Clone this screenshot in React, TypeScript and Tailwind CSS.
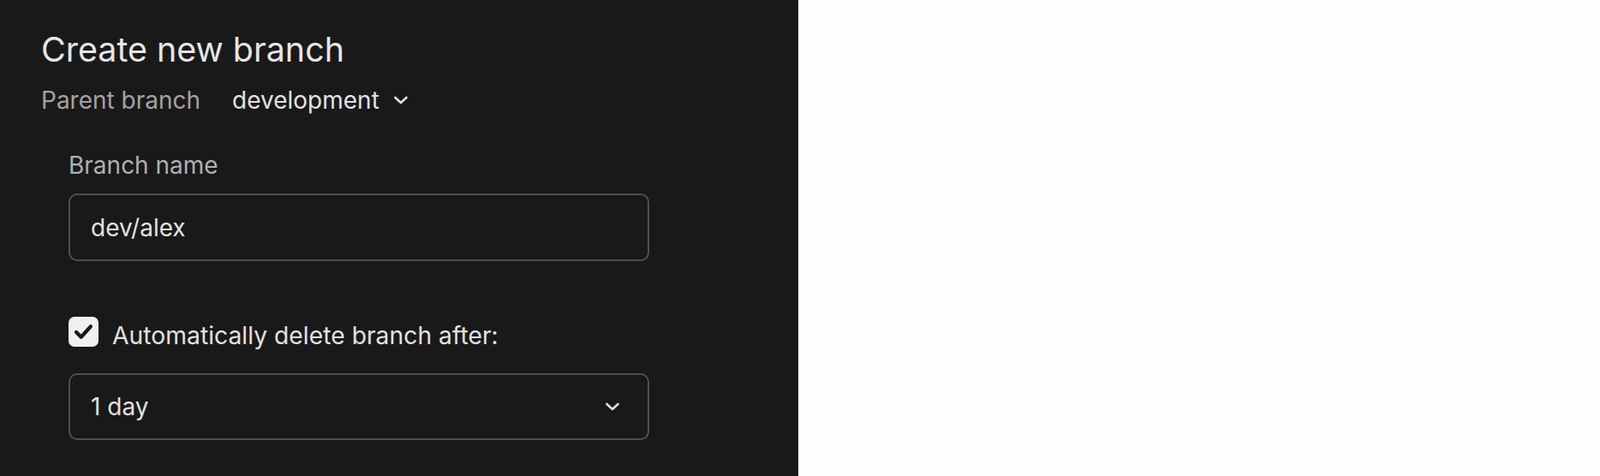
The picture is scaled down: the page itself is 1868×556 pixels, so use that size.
import { useState } from 'react';

function Chevron({ className }: { className?: string }) {
  return (
    <svg viewBox="0 0 18 10" fill="none" stroke="currentColor" strokeWidth="2.6" strokeLinecap="round" strokeLinejoin="round" className={className} aria-hidden="true">
      <path d="M2.5 2l6.5 6 6.5-6" />
    </svg>
  );
}

export default function App() {
  const [name, setName] = useState('dev/alex');
  const [autoDelete, setAutoDelete] = useState(true);

  return (
    <div className="flex h-[556px] w-full bg-[#fefefe]" style={{ fontFamily: 'Inter, "Noto Sans", sans-serif' }}>
      <div className="w-[932px] h-full bg-[#191919] pl-12 pt-[34px]">
        <h1 className="text-[39.4px] leading-[48px] font-normal text-[#e6e6e6]">Create new branch</h1>

        <div className="mt-[17px] flex items-center gap-[37px] text-[28px] leading-[36px]">
          <span className="text-[#a3a3a3]">Parent branch</span>
          <button type="button" className="flex items-center gap-[16px] text-[#e2e2e2]">
            development
            <Chevron className="w-[18px] h-[10px] text-[#e2e2e2]" />
          </button>
        </div>

        <div className="ml-8 mt-[40px] w-[678px]">
          <label className="block text-[28px] leading-[36px] text-[#b0b0b0]">Branch name</label>
          <input
            value={name}
            onChange={(e) => setName(e.target.value)}
            className="mt-[15px] h-[79px] w-full rounded-[10px] border-2 border-[#4f4f4f] bg-transparent px-[24px] text-[28px] text-[#e2e2e2] outline-none"
          />

          <label className="mt-[65px] flex items-start gap-[16px] text-[28.3px] leading-[36px] text-[#e2e2e2]">
            <button
              type="button"
              onClick={() => setAutoDelete((v) => !v)}
              className="flex h-[35px] w-[35px] shrink-0 items-center justify-center rounded-[7px] bg-[#f0f0f0]"
            >
              {autoDelete && (
                <svg viewBox="0 0 24 24" fill="none" stroke="#191919" strokeWidth="3.8" strokeLinecap="round" strokeLinejoin="round" className="h-[27px] w-[27px]">
                  <path d="M4.5 12.5l5 5L19.5 6.5" />
                </svg>
              )}
            </button>
            <span className="mt-[4px]">Automatically delete branch after:</span>
          </label>

          <button
            type="button"
            className="mt-[26px] flex h-[78px] w-full items-center justify-between rounded-[10px] border-2 border-[#4f4f4f] pl-[24px] pr-[32px] text-[28px] text-[#e2e2e2]"
          >
            1 day
            <Chevron className="w-[18px] h-[10px] text-[#e2e2e2]" />
          </button>
        </div>
      </div>
      <div className="flex-1" />
    </div>
  );
}
